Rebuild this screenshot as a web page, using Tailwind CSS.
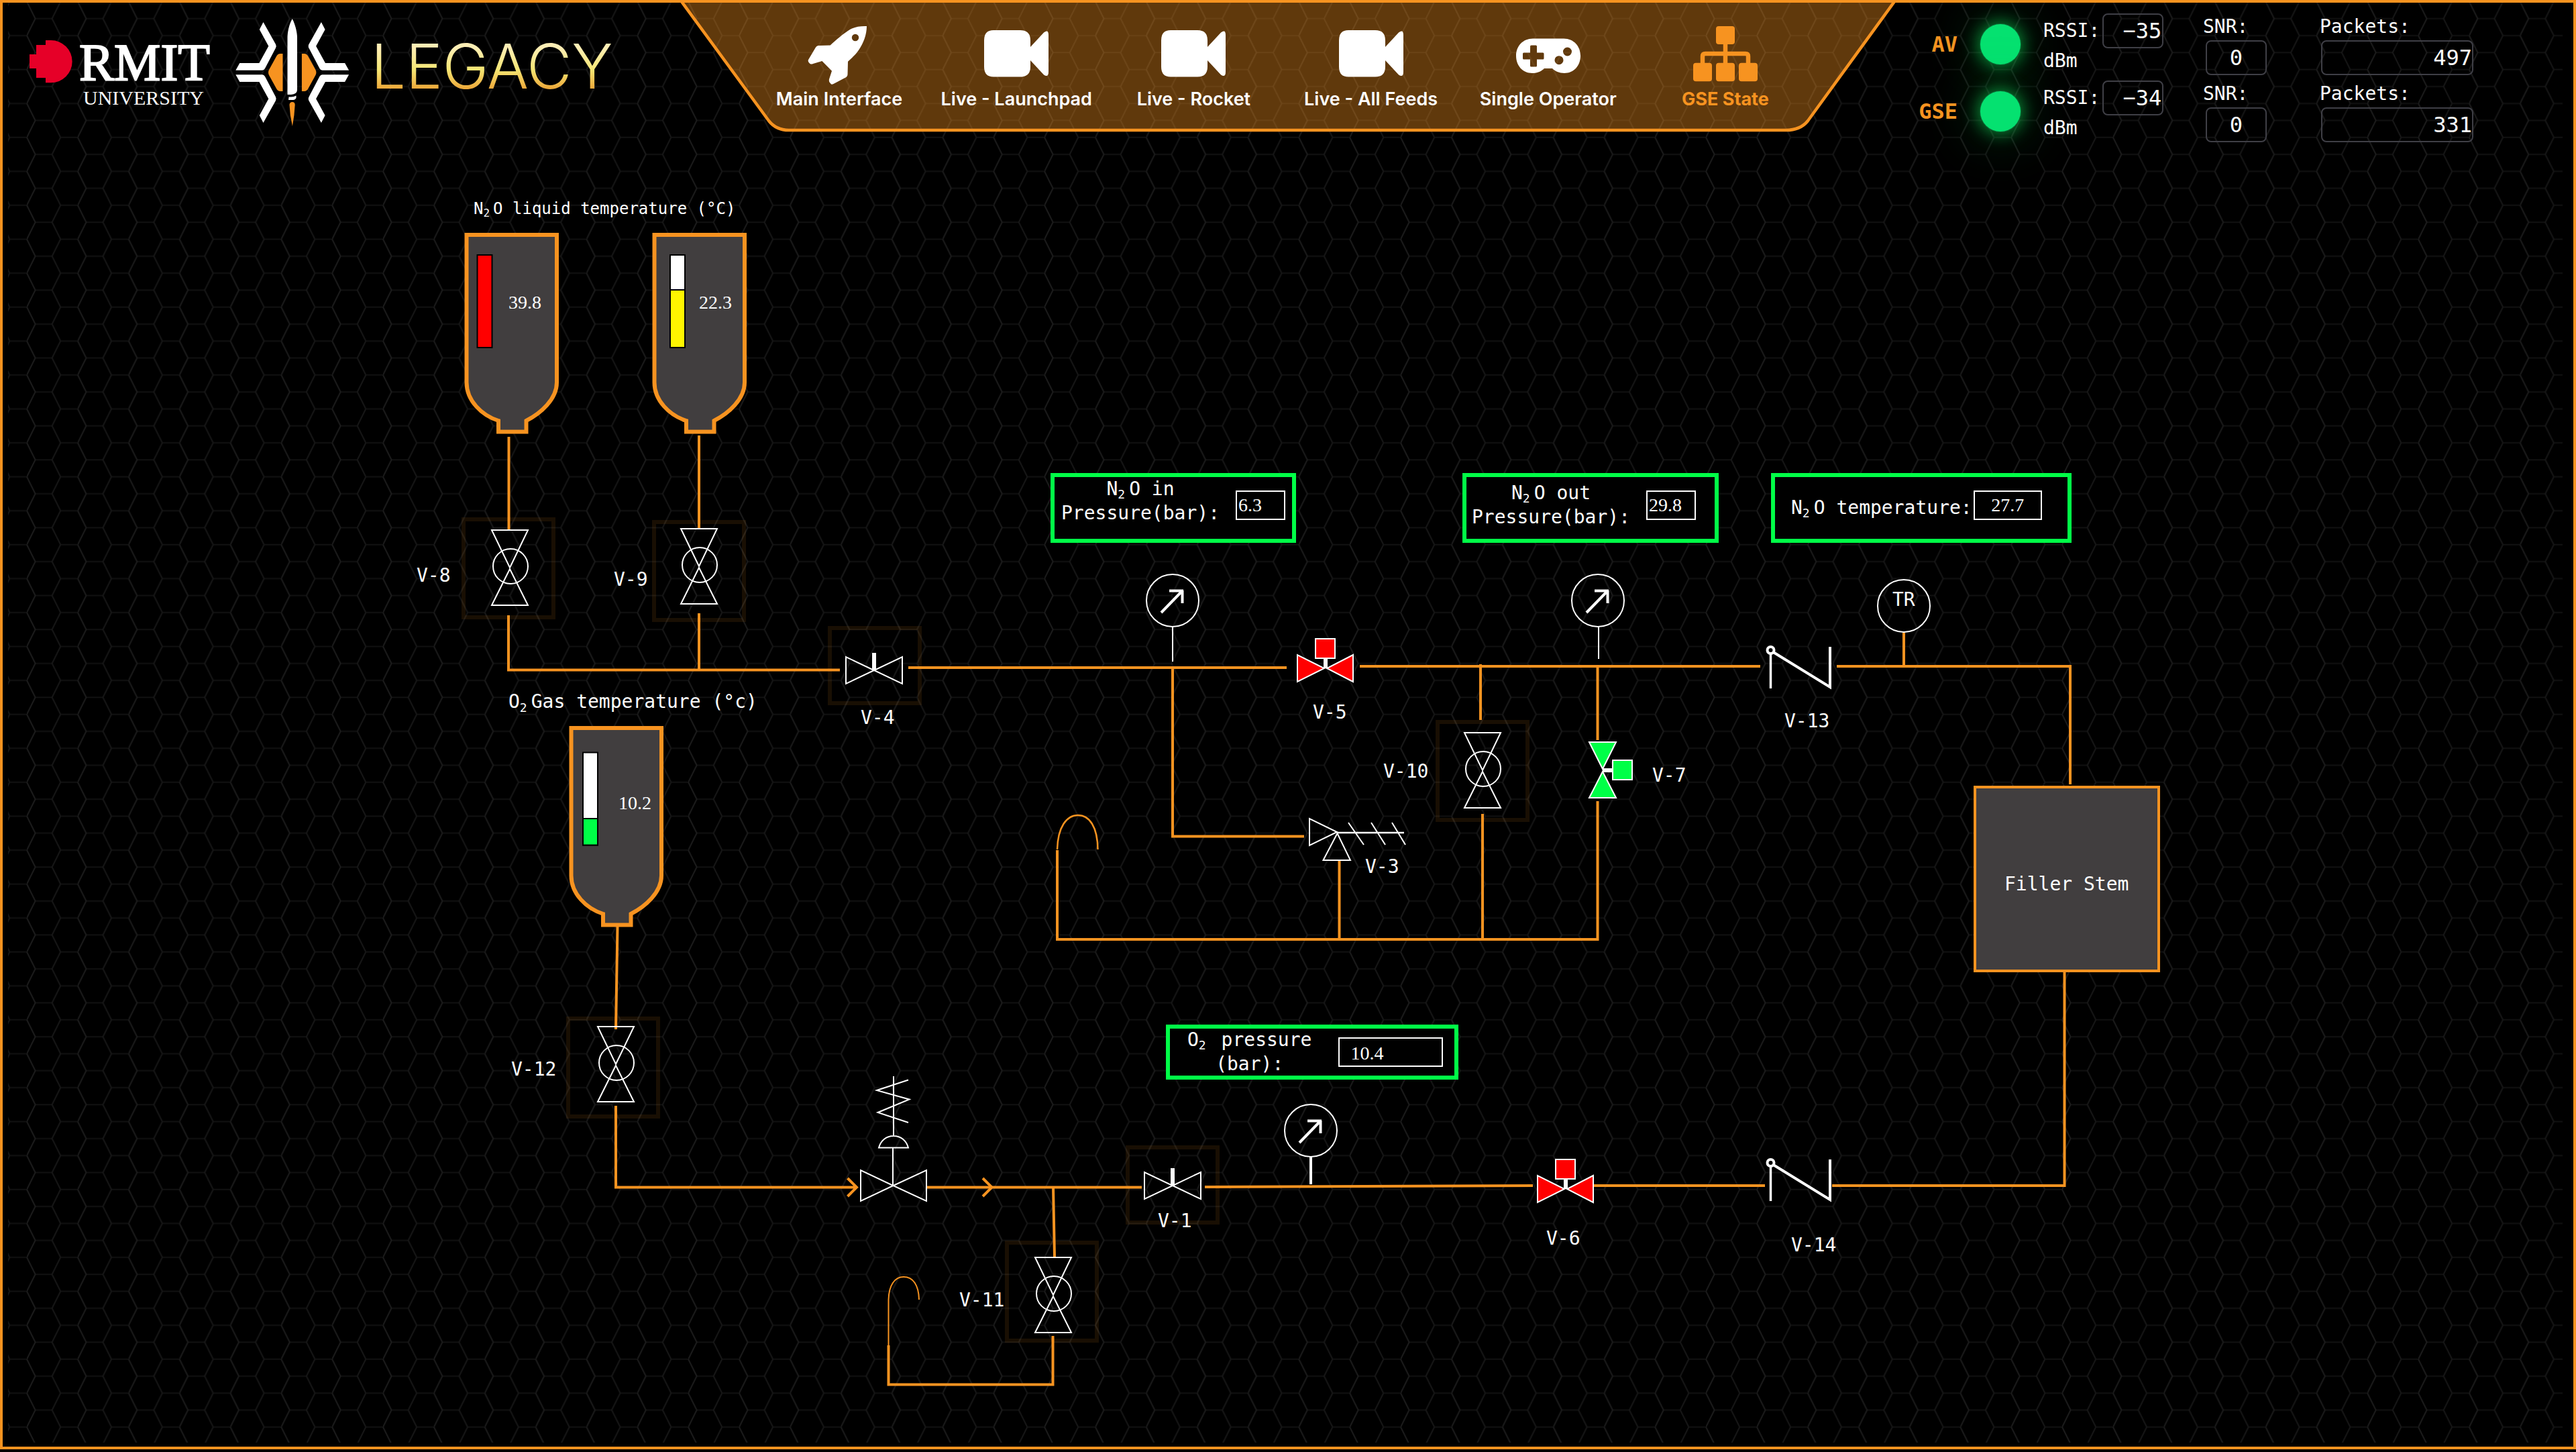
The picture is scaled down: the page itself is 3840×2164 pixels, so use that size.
<!DOCTYPE html>
<html lang="en">
<head>
<meta charset="utf-8">
<title>GSE State</title>
<script src="https://cdn.jsdelivr.net/npm/@tailwindcss/browser@4"></script>
</head>
<body class="flex min-h-screen flex-col bg-black pb-1 text-white">
<div class="relative isolate flex-1 border-4 border-[#f79320]">

  <!-- Honeycomb backdrop -->
  <div class="absolute inset-0 -z-10 pt-0 pr-4 pb-1.5 pl-2" aria-hidden="true">
    <svg class="h-full w-full">
      <defs>
        <pattern id="hex" x="28" y="36.4" width="75.85" height="50.58" patternUnits="userSpaceOnUse">
          <g fill="none" stroke="#1b1b1b" stroke-width="2">
            <path d="M-12.8 12.6H0M50.2 12.6H75.85M12.6 37.9H37.6" stroke="#111111"/>
            <path d="M0 12.6L12.6 37.9L0 63.2M0 12.6L12.6 -12.7M75.85 12.6L88 37.9"/>
            <path d="M50.2 12.6L37.6 37.9L50.2 63.2M50.2 12.6L37.6 -12.7" stroke="#161616"/>
          </g>
        </pattern>
      </defs>
      <rect width="100%" height="100%" fill="url(#hex)"/>
    </svg>
  </div>

  <header class="grid h-[216px] grid-cols-[1010fr_1812fr_1010fr] font-['DejaVu_Sans_Mono',monospace]">

    <!-- Logos -->
    <div class="h-48">
      <svg class="h-full w-full" viewBox="4 4 1010 192" preserveAspectRatio="xMinYMin meet" role="img" aria-label="RMIT University, Legacy">
        <defs>
          <linearGradient id="gold" x1="0" y1="0" x2="0" y2="1">
            <stop offset="0.25" stop-color="#fdeeb5"/>
            <stop offset="0.55" stop-color="#f5e673"/>
            <stop offset="0.8" stop-color="#eda93a"/>
          </linearGradient>
          <path id="claw" d="M392.5 33L386.8 44L400.3 68.7L386.4 94H357.3L351.3 104.7H391Q393.5 104.7 395 102L411 71.5Q412.4 68.7 411 66Z"/>
          <path id="fin" d="M421.5 80V136H418Q414 136 412 132L401 112Q399 108 401 104L412 84Q414 80 418 80Z"/>
        </defs>
        <path d="M68 60H76A31.5 31.5 0 0 1 76 123.3H68V116H54V102H44V81H54V67H68Z" fill="#e60028"/>
        <text x="118" y="119" font-size="78" fill="#fff" stroke="#fff" stroke-width="2" class="font-['Liberation_Serif',serif]">RMIT</text>
        <text x="124" y="156" font-size="30" fill="#fff" class="font-['Liberation_Serif',serif]">UNIVERSITY</text>
        <g fill="#fff">
          <use href="#claw"/>
          <use href="#claw" transform="matrix(-1 0 0 1 871.4 0)"/>
          <use href="#claw" transform="matrix(1 0 0 -1 0 216)"/>
          <use href="#claw" transform="matrix(-1 0 0 -1 871.4 216)"/>
          <path d="M435.7 28C430 38 428.5 50 428.5 56V141H434Q443 140 443 134V56C443 50 441 38 435.7 28Z"/>
          <path d="M430.5 144.5H434Q438 144.3 441.5 142.5V146Q440 149 437 149H430Z"/>
        </g>
        <g fill="#f79320">
          <use href="#fin"/>
          <use href="#fin" transform="matrix(-1 0 0 1 871.4 0)"/>
          <path d="M431.5 156Q432 152 435.7 152Q439.5 152 439.7 156Q439 172 435.9 188Q432 172 431.5 156Z"/>
        </g>
        <text x="553" y="132" font-size="92" font-weight="300" fill="url(#gold)" class="font-[Inter,sans-serif]">LEGACY</text>
      </svg>
    </div>

    <!-- Main navigation -->
    <nav class="relative isolate h-48">
      <svg class="absolute inset-0 -z-10 h-full w-full overflow-visible" viewBox="1014 4 1812 192" preserveAspectRatio="none" aria-hidden="true">
        <path d="M1017 4L1146 180Q1157 194 1176 194H2662Q2684 194 2695 180L2823 4Z" fill="#f79320" fill-opacity="0.39"/>
        <path d="M1015 1L1146 180Q1157 194 1176 194H2662Q2684 194 2695 180L2825 1" fill="none" stroke="#f79320" stroke-width="4.5"/>
      </svg>
      <ul class="grid grid-cols-6 pt-8 pr-[122px] pl-[105px] text-center font-[Inter,sans-serif] text-[27px] leading-8 font-semibold whitespace-nowrap">
        <li><a href="#main" class="flex flex-col items-center gap-1">
          <svg class="h-[92px] w-24" viewBox="0 0 96 92" fill="currentColor"><path fill-rule="evenodd" d="M89 3C80 2.500 71 4 64 8C54 14 43 24 34.600 31.500L16.500 32Q14 32.500 13 34.500L2 53Q1 55.500 3 57.500L4.500 59Q6.500 60 9 59L22.400 55L37 69.700L33 82Q32.500 85 33.500 86.500L36 89.500Q37.500 90 39.500 89L58.500 79Q60.500 77.500 60.500 75L61 55.700C67 50 73 45 77.500 38C84 28 89 16 89 3ZM72 14.800a5.200 5.200 0 1 0 0 10.400a5.200 5.200 0 1 0 0-10.400Z"/></svg>
          Main Interface</a></li>
        <li><a href="#launchpad" class="flex flex-col items-center gap-1">
          <svg class="h-[92px] w-24" viewBox="0 0 96 92" fill="currentColor"><path d="M14 9H54Q69 9 69 24V34L89 12.500Q96 7 96 16V71Q96 80 89 75.500L69 54V63.500Q69 78.500 54 78.500H14Q0 78.500 0 63.500V24Q0 9 14 9Z"/></svg>
          Live - Launchpad</a></li>
        <li><a href="#rocket" class="flex flex-col items-center gap-1">
          <svg class="h-[92px] w-24" viewBox="0 0 96 92" fill="currentColor"><path d="M14 9H54Q69 9 69 24V34L89 12.500Q96 7 96 16V71Q96 80 89 75.500L69 54V63.500Q69 78.500 54 78.500H14Q0 78.500 0 63.500V24Q0 9 14 9Z"/></svg>
          Live - Rocket</a></li>
        <li><a href="#feeds" class="flex flex-col items-center gap-1">
          <svg class="h-[92px] w-24" viewBox="0 0 96 92" fill="currentColor"><path d="M14 9H54Q69 9 69 24V34L89 12.500Q96 7 96 16V71Q96 80 89 75.500L69 54V63.500Q69 78.500 54 78.500H14Q0 78.500 0 63.500V24Q0 9 14 9Z"/></svg>
          Live - All Feeds</a></li>
        <li><a href="#operator" class="flex flex-col items-center gap-1">
          <svg class="h-[92px] w-24" viewBox="0 0 96 92" fill="currentColor"><path fill-rule="evenodd" d="M25 21.500H71C86 21.500 96 33 96 47C96 62 86 73 72 73C64 73 58 70 54 66H42C38 70 32 73 24 73C10 73 0 62 0 47C0 33 10 21.500 25 21.500ZM22.500 31.500Q21 31.500 21 33V42.500H11.500Q10 42.500 10 44V51Q10 52.500 11.500 52.500H21V62Q21 63.500 22.500 63.500H29.500Q31 63.500 31 62V52.500H40Q41.500 52.500 41.500 51V44Q41.500 42.500 40 42.500H31V33Q31 31.500 29.500 31.500ZM76.500 34.500a6.500 6.500 0 1 0 0 13a6.500 6.500 0 1 0 0-13ZM64 47.200a6.500 6.500 0 1 0 0 13a6.500 6.500 0 1 0 0-13Z"/></svg>
          Single Operator</a></li>
        <li><a href="#gse" aria-current="page" class="flex flex-col items-center gap-1 font-bold text-[#f79320]">
          <svg class="h-[92px] w-24" viewBox="0 0 96 92" fill="currentColor"><rect x="34" y="3" width="28" height="27" rx="4"/><rect x="0" y="57.700" width="28" height="27.600" rx="4"/><rect x="34" y="57.700" width="28" height="27.600" rx="4"/><rect x="68" y="57.700" width="28" height="27.600" rx="4"/><path d="M48 29V60M14 60V48Q14 44 18 44H78Q82 44 82 48V60" fill="none" stroke="currentColor" stroke-width="6.500"/></svg>
          GSE State</a></li>
      </ul>
    </nav>

    <!-- Radio link telemetry -->
    <div class="pt-3 text-[28px]">
      <section class="grid h-[100px] grid-cols-[92px_60px_204px_140px_232px] items-start gap-x-[34px]">
        <h2 class="self-center text-right text-[32px] leading-10 font-bold text-[#f79320]">AV</h2>
        <span class="size-[60px] self-center rounded-full bg-[#05e170] shadow-[0_0_0_1px_#0a6b34,0_0_24px_4px_rgba(16,200,80,0.65),0_0_80px_8px_rgba(16,180,70,0.28)]"></span>
        <div class="pt-1">
          <div class="flex items-center gap-1">
            <label for="av-rssi" class="leading-[44px]">RSSI:</label>
            <input id="av-rssi" readonly value="−35" class="h-[52px] w-[91px] rounded-lg border-2 border-[#3f3f46] bg-transparent pr-px text-right text-[32px]">
          </div>
          <div class="leading-[38px]">dBm</div>
        </div>
        <div class="pt-1">
          <label for="av-snr" class="block leading-10">SNR:</label>
          <input id="av-snr" readonly value="0" class="ml-1 block h-[52px] w-[91px] rounded-lg border-2 border-[#3f3f46] bg-transparent text-center text-[32px]">
        </div>
        <div class="pt-1">
          <label for="av-packets" class="block leading-10">Packets:</label>
          <input id="av-packets" readonly value="497" class="ml-0.5 block h-[52px] w-[227px] rounded-lg border-2 border-[#3f3f46] bg-transparent text-right text-[32px]">
        </div>
      </section>
      <section class="grid h-[100px] grid-cols-[92px_60px_204px_140px_232px] items-start gap-x-[34px]">
        <h2 class="self-center text-right text-[32px] leading-10 font-bold text-[#f79320]">GSE</h2>
        <span class="size-[60px] self-center rounded-full bg-[#05e170] shadow-[0_0_0_1px_#0a6b34,0_0_24px_4px_rgba(16,200,80,0.65),0_0_80px_8px_rgba(16,180,70,0.28)]"></span>
        <div class="pt-1">
          <div class="flex items-center gap-1">
            <label for="gse-rssi" class="leading-[44px]">RSSI:</label>
            <input id="gse-rssi" readonly value="−34" class="h-[52px] w-[91px] rounded-lg border-2 border-[#3f3f46] bg-transparent pr-px text-right text-[32px]">
          </div>
          <div class="leading-[38px]">dBm</div>
        </div>
        <div class="pt-1">
          <label for="gse-snr" class="block leading-10">SNR:</label>
          <input id="gse-snr" readonly value="0" class="ml-1 block h-[52px] w-[91px] rounded-lg border-2 border-[#3f3f46] bg-transparent text-center text-[32px]">
        </div>
        <div class="pt-1">
          <label for="gse-packets" class="block leading-10">Packets:</label>
          <input id="gse-packets" readonly value="331" class="ml-0.5 block h-[52px] w-[227px] rounded-lg border-2 border-[#3f3f46] bg-transparent text-right text-[32px]">
        </div>
      </section>
    </div>
  </header>

  <!-- Ground support plumbing diagram -->
  <main>
    <svg class="block w-full font-['DejaVu_Sans_Mono',monospace] text-[28px]" viewBox="4 220 3832 1936">
      <defs>
        <path id="tank" d="M695.500 350H830V570C830 595 806 616 784.500 627V643.500H743V627C718 619 695.500 597 695.500 570Z" fill="#413e3f" stroke="#f79320" stroke-width="6"/>
        <g id="ball" fill="none" stroke="#fff" stroke-width="2">
          <path d="M-27 1H27L0 57ZM0 59L-27 113H27Z"/>
          <circle cx="1" cy="55" r="26"/>
        </g>
        <g id="gate" fill="none" stroke="#fff" stroke-width="2">
          <path d="M-42 -20V20L0 0ZM42 -20V20L0 0Z"/>
          <rect x="-2" y="-25" width="4" height="24" fill="#fff"/>
        </g>
        <g id="actuated" stroke="#fff" stroke-width="2">
          <path d="M-42 -20V20L-2 0ZM41 -20V20L2 0Z"/>
          <path d="M0 -15V0" stroke-width="6"/>
          <rect x="-15" y="-44" width="29" height="29"/>
        </g>
        <g id="gauge" fill="none" stroke="#fff">
          <circle r="39" stroke-width="2"/>
          <path d="M-17 18L14 -14M-5 -14.500H16M14.500 -15V4" stroke-width="4"/>
        </g>
        <g id="check" fill="none" stroke="#fff" stroke-width="4">
          <circle r="5" stroke-width="4"/>
          <path d="M0 6V57" stroke-width="3.500"/>
          <path d="M4 3L88.500 55V-5"/>
        </g>
        <rect id="frame-v" x="3" y="3" width="134" height="146"/>
        <rect id="frame-h" x="3" y="3" width="134" height="112"/>
      </defs>

      <g fill="none" stroke="#f79320" stroke-opacity="0.1" stroke-width="6">
        <use href="#frame-v" x="688" y="771"/>
        <use href="#frame-v" x="972" y="775"/>
        <use href="#frame-v" x="2140" y="1073"/>
        <use href="#frame-v" x="844" y="1515"/>
        <use href="#frame-v" x="1498" y="1849"/>
        <use href="#frame-h" x="1234" y="933"/>
        <use href="#frame-h" x="1678" y="1707"/>
      </g>

      <!-- Pipes -->
      <g fill="none" stroke="#f79320" stroke-width="4">
        <path d="M758.500 651V789M758 917V998.500H1252M1042 649V787M1042 914V998"/>
        <path d="M1354 995H1918M2027 993H2624M2738 993H3086V1169"/>
        <path d="M1748 995V1246.500H1944M2207 990V1073M2210 1213V1400M2381.500 993V1103M2381.500 1194V1400H1576V1267M1996.500 1283V1400"/>
        <path d="M1576 1266C1577 1232 1590 1215 1607 1215C1624 1215 1636 1232 1636.500 1266" stroke-width="2.500"/>
        <path d="M2838 943V993"/>
        <path d="M3077.500 1449V1767H2731M2631 1767H2376M2285 1767L1796 1769M1702 1769.500H1381"/>
        <path d="M920.500 1381L918 1534M918 1648V1769.500H1276M1263.500 1756L1277 1769.500L1263.500 1783M1465 1756L1478.500 1769.500L1465 1783"/>
        <path d="M1570 1769L1572 1873M1569.500 1991V2063.500H1324.500V2005"/>
        <path d="M1324.500 2006V1937C1325 1915 1334 1903 1347 1903C1361 1903 1369.500 1915 1370 1937" stroke-width="2"/>
      </g>

      <!-- Tanks -->
      <use href="#tank"/>
      <use href="#tank" x="280"/>
      <use href="#tank" x="156" y="735"/>
      <g stroke="#000" stroke-width="2">
        <rect x="711.500" y="380" width="22" height="138" fill="#f00"/>
        <rect x="999" y="380" width="22" height="138" fill="#fff"/>
        <rect x="999" y="432" width="22" height="86" fill="#fff500"/>
        <rect x="869" y="1121.500" width="22" height="138" fill="#fff"/>
        <rect x="869" y="1220" width="22" height="39.500" fill="#00ff47"/>
      </g>
      <g fill="#fff" class="font-['Liberation_Serif',serif] text-[28px]">
        <text x="758" y="460">39.8</text>
        <text x="1042" y="460">22.3</text>
        <text x="922" y="1206">10.2</text>
      </g>

      <!-- Manual valves -->
      <use href="#ball" x="760" y="789"/>
      <use href="#ball" x="1042" y="787"/>
      <use href="#ball" x="2210" y="1091"/>
      <use href="#ball" x="918" y="1529"/>
      <use href="#ball" x="1570" y="1873"/>
      <use href="#gate" x="1303" y="999"/>
      <use href="#gate" x="1748" y="1767"/>

      <!-- Actuated valves: red is shut, green is open -->
      <use href="#actuated" x="1976" y="996" fill="#f00"/>
      <use href="#actuated" x="2334" y="1772" fill="#f00"/>
      <use href="#actuated" transform="translate(2389 1148) rotate(90)" fill="#00ff47"/>

      <!-- Pressure gauges and temperature reader -->
      <use href="#gauge" x="1748" y="895"/>
      <use href="#gauge" x="2382" y="895"/>
      <use href="#gauge" x="1954" y="1685"/>
      <g fill="none" stroke="#fff" stroke-width="2">
        <path d="M1748 934V986M2383 934V982"/>
        <path d="M1954 1724V1765" stroke-width="4"/>
        <circle cx="2838" cy="903" r="39"/>
      </g>

      <!-- Check valves -->
      <use href="#check" x="2639.500" y="969"/>
      <use href="#check" x="2639.500" y="1733"/>

      <!-- Relief valve V-3 and pressure regulator -->
      <g fill="none" stroke="#fff" stroke-width="2">
        <path d="M1952 1220V1260L1993 1240ZM1993.500 1242L1972.500 1282H2013Z"/>
        <path d="M1994 1241H2093" stroke-width="2.500"/>
        <path d="M2010 1226L2033 1259M2044 1226L2065 1259M2075 1226L2095 1259"/>
        <path d="M1283 1744V1790L1331.500 1767ZM1381 1744V1790L1331.500 1767Z"/>
        <path d="M1331 1767V1711M1310 1710.500H1354C1351 1700 1343 1693 1332 1693C1321 1693 1313 1700 1310 1710.500ZM1332 1693V1604"/>
        <path d="M1354 1609.500L1307 1625L1355.500 1638.500L1308.500 1658L1354 1673"/>
      </g>

      <rect x="2944" y="1173" width="274" height="274" fill="#413e3f" stroke="#f79320" stroke-width="4"/>

      <g fill="#fff">
        <text x="706" y="319" class="text-[24px]">N<tspan dy="4" class="text-[16px]">2</tspan><tspan dx="5" dy="-4">O liquid temperature (°C)</tspan></text>
        <text x="758" y="1055">O<tspan dy="6" class="text-[18px]">2</tspan><tspan dx="6" dy="-6">Gas temperature (°c)</tspan></text>
        <text x="621" y="867">V-8</text>
        <text x="915" y="873">V-9</text>
        <text x="1283" y="1079">V-4</text>
        <text x="762" y="1603">V-12</text>
        <text x="1430" y="1947">V-11</text>
        <text x="1957" y="1071">V-5</text>
        <text x="2062" y="1159">V-10</text>
        <text x="2035" y="1301">V-3</text>
        <text x="2660" y="1084">V-13</text>
        <text x="2463" y="1165">V-7</text>
        <text x="1726" y="1829">V-1</text>
        <text x="2305" y="1855">V-6</text>
        <text x="2670" y="1865">V-14</text>
        <text x="2821" y="903">TR</text>
        <text x="2988" y="1327">Filler Stem</text>
      </g>

      <!-- Sensor readouts -->
      <foreignObject x="1566" y="705" width="366" height="104">
        <div class="flex h-full items-start gap-6 border-6 border-[#00ff47] bg-black pl-2.5 text-white">
          <label for="n2o-in" class="text-center leading-9 whitespace-nowrap">N<sub class="mr-1.5 text-[18px]">2</sub>O in<br>Pressure(bar):</label>
          <input id="n2o-in" readonly value="6.3" class="mt-5 h-11 w-[74px] border-2 border-white bg-black pl-0.5 font-['Liberation_Serif',serif] text-[28px]">
        </div>
      </foreignObject>
      <foreignObject x="2180" y="705" width="382" height="104">
        <div class="flex h-full items-start gap-6 border-6 border-[#00ff47] bg-black pl-2 text-white">
          <label for="n2o-out" class="pt-1.5 text-center leading-9 whitespace-nowrap">N<sub class="mr-1.5 text-[18px]">2</sub>O out<br>Pressure(bar):</label>
          <input id="n2o-out" readonly value="29.8" class="mt-5 h-11 w-[74px] border-2 border-white bg-black pl-0.5 font-['Liberation_Serif',serif] text-[28px]">
        </div>
      </foreignObject>
      <foreignObject x="2640" y="705" width="448" height="104">
        <div class="flex h-full items-start gap-0.5 border-6 border-[#00ff47] bg-black pl-6 text-white">
          <label for="n2o-temp" class="pt-7 leading-9 whitespace-nowrap">N<sub class="mr-1.5 text-[18px]">2</sub>O temperature:</label>
          <input id="n2o-temp" readonly value="27.7" class="mt-5 h-11 w-[102px] border-2 border-white bg-black text-center font-['Liberation_Serif',serif] text-[28px]">
        </div>
      </foreignObject>
      <foreignObject x="1738" y="1527" width="436" height="82">
        <div class="flex h-full items-center gap-10 border-6 border-[#00ff47] bg-black pl-[26px] text-white">
          <label for="o2-pressure" class="text-center leading-9 whitespace-nowrap">O<sub class="mr-1.5 text-[18px]">2</sub> pressure<br>(bar):</label>
          <input id="o2-pressure" readonly value="10.4" class="h-11 w-[156px] border-2 border-white bg-black pt-1 pl-4 font-['Liberation_Serif',serif] text-[28px]">
        </div>
      </foreignObject>
    </svg>
  </main>
</div>
</body>
</html>
